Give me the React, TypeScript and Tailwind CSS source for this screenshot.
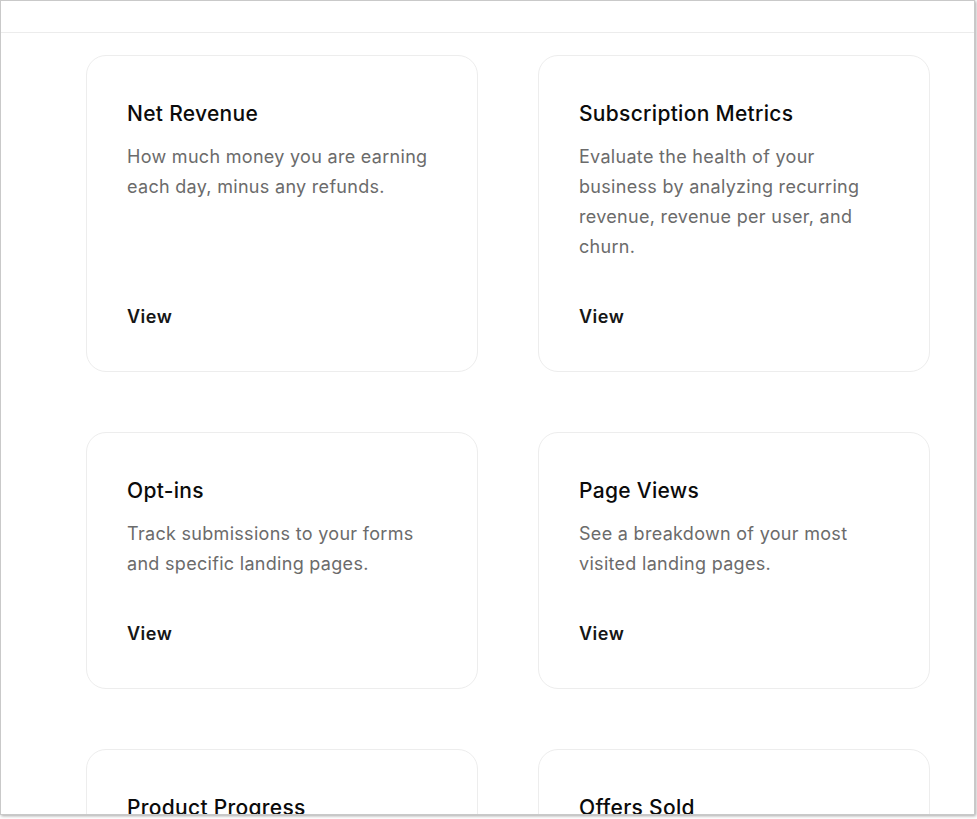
const reports = [
  [
    {
      title: "Net Revenue",
      text: "How much money you are earning each day, minus any refunds.",
    },
    {
      title: "Subscription Metrics",
      text: "Evaluate the health of your business by analyzing recurring revenue, revenue per user, and churn.",
    },
  ],
  [
    {
      title: "Opt-ins",
      text: "Track submissions to your forms and specific landing pages.",
    },
    {
      title: "Page Views",
      text: "See a breakdown of your most visited landing pages.",
    },
  ],
  [
    { title: "Product Progress", text: "Track how your members move through your products." },
    { title: "Offers Sold", text: "See which of your offers are selling the most." },
  ],
];

const ReportCard = ({ title, text }: { title: string; text: string }) => (
  <div className="flex flex-col rounded-[20px] border border-[#ededed] bg-white px-10 pt-[44px] pb-[40px]">
    <h3 className="text-[21px] leading-[28px] font-medium tracking-[0.3px] text-[#0b0b0b]">{title}</h3>
    <p className="mt-[14px] text-[18px] leading-[30px] tracking-[0.3px] text-[#6b6b6b]">{text}</p>
    <a href="#" className="mt-auto pt-[41px] text-[18px] leading-[28px] font-semibold tracking-[0.5px] text-[#161616]">
      View
    </a>
  </div>
);

export default function App() {
  return (
    <div className="h-[819px] w-[977px] bg-white" style={{ fontFamily: "Inter, 'Noto Sans', sans-serif" }}>
      <div className="h-[815px] w-[975px] overflow-hidden border border-[#c9c9c9] bg-white shadow-[1px_1px_3px_rgba(0,0,0,0.35)]">
        {/* top bar */}
        <div className="h-[32px] border-b border-[#ececec]" />

        <div className="flex flex-col gap-[60px] pt-[22px] pl-[85px]">
          {reports.map((row, i) => (
            <div key={i} className="grid grid-cols-[392px_392px] gap-x-[60px]">
              {row.map((r) => (
                <ReportCard key={r.title} title={r.title} text={r.text} />
              ))}
            </div>
          ))}
        </div>
      </div>
    </div>
  );
}
